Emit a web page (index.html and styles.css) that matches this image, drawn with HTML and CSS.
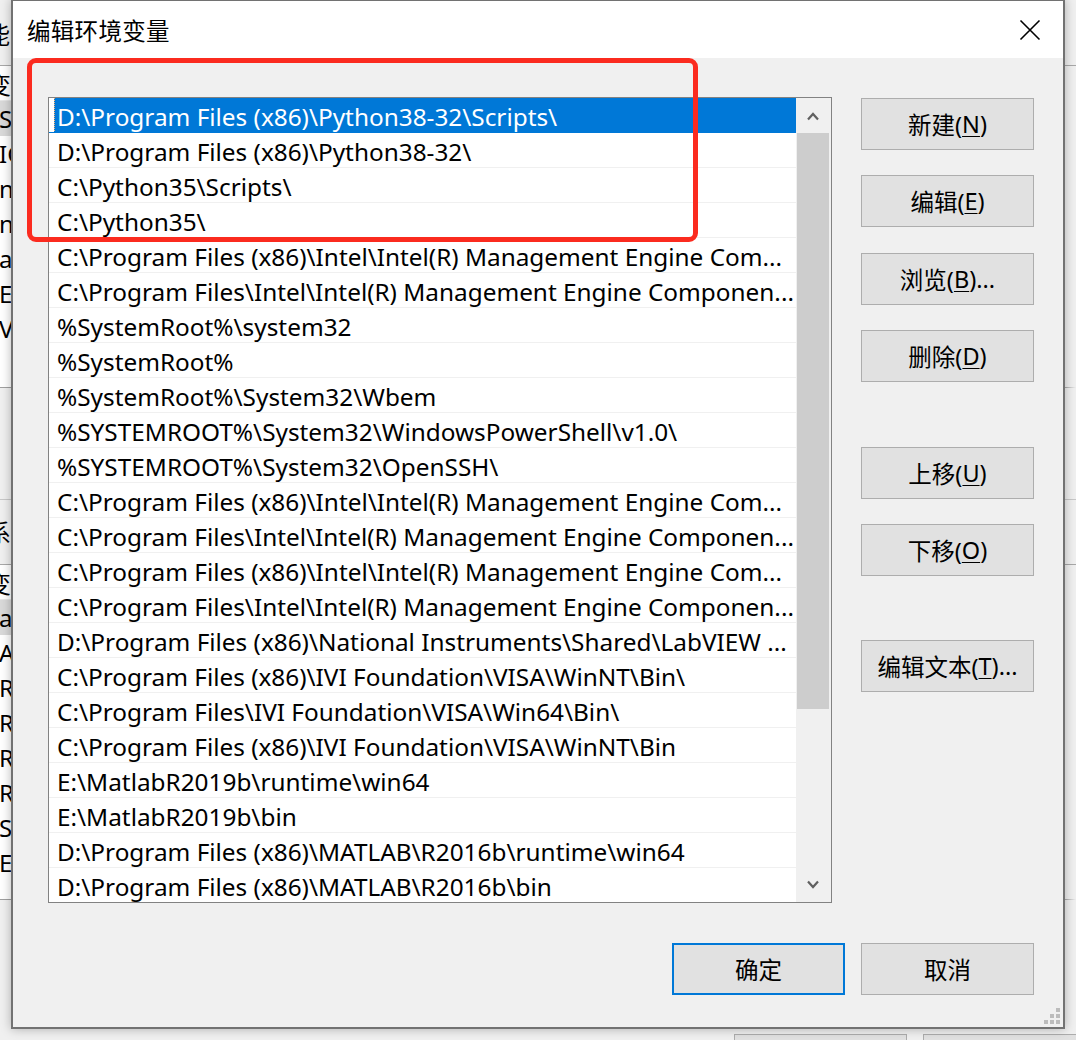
FILE: index.html
```html
<!DOCTYPE html>
<html lang="zh-CN">
<head>
<meta charset="utf-8">
<title>编辑环境变量</title>
<link rel="stylesheet" href="styles.css">
</head>
<body>
<div class="desk">
  <div class="bg-head"><span class="frag cjk">能</span></div>
  <div class="bg-table">
    <div class="bg-th"><span class="frag cjk hd">变量</span></div>
    <div class="bg-row sel"><span class="frag">STEM</span></div>
    <div class="bg-row"><span class="frag">ICK</span></div>
    <div class="bg-row"><span class="frag">nux</span></div>
    <div class="bg-row"><span class="frag">nu</span></div>
    <div class="bg-row"><span class="frag">ath</span></div>
    <div class="bg-row"><span class="frag">EMP</span></div>
    <div class="bg-row"><span class="frag">VIR</span></div>
  </div>
  <div class="bg-gap"></div>
  <div class="bg-head2"><span class="frag cjk hd">系统</span></div>
  <div class="bg-table t2">
    <div class="bg-th"><span class="frag cjk hd">变量</span></div>
    <div class="bg-row sel"><span class="frag">ath</span></div>
    <div class="bg-row"><span class="frag">ATH</span></div>
    <div class="bg-row"><span class="frag">ROC</span></div>
    <div class="bg-row"><span class="frag">ROC</span></div>
    <div class="bg-row"><span class="frag">ROC</span></div>
    <div class="bg-row"><span class="frag">ROC</span></div>
    <div class="bg-row"><span class="frag">SIS</span></div>
    <div class="bg-row"><span class="frag">EMP</span></div>
  </div>
  <div class="bg-foot">
    <div class="bg-btn"></div>
    <div class="bg-btn"></div>
  </div>
</div>

<div class="dialog">
  <div class="titlebar">
    <span class="title">编辑环境变量</span>
    <svg class="close" width="22" height="22" viewBox="0 0 22 22"><path d="M1.5 1.5 L20.5 20.5 M20.5 1.5 L1.5 20.5" stroke="#000" stroke-width="1.6" fill="none"/></svg>
  </div>
  <div class="dlg-body">
    <div class="main">
      <div class="listbox">
        <ul class="rows">
          <li class="selected"><span>D:\Program Files (x86)\Python38-32\Scripts\</span></li>
          <li><span>D:\Program Files (x86)\Python38-32\</span></li>
          <li><span>C:\Python35\Scripts\</span></li>
          <li><span>C:\Python35\</span></li>
          <li><span>C:\Program Files (x86)\Intel\Intel(R) Management Engine Com...</span></li>
          <li><span>C:\Program Files\Intel\Intel(R) Management Engine Componen...</span></li>
          <li><span>%SystemRoot%\system32</span></li>
          <li><span>%SystemRoot%</span></li>
          <li><span>%SystemRoot%\System32\Wbem</span></li>
          <li><span>%SYSTEMROOT%\System32\WindowsPowerShell\v1.0\</span></li>
          <li><span>%SYSTEMROOT%\System32\OpenSSH\</span></li>
          <li><span>C:\Program Files (x86)\Intel\Intel(R) Management Engine Com...</span></li>
          <li><span>C:\Program Files\Intel\Intel(R) Management Engine Componen...</span></li>
          <li><span>C:\Program Files (x86)\Intel\Intel(R) Management Engine Com...</span></li>
          <li><span>C:\Program Files\Intel\Intel(R) Management Engine Componen...</span></li>
          <li><span>D:\Program Files (x86)\National Instruments\Shared\LabVIEW ...</span></li>
          <li><span>C:\Program Files (x86)\IVI Foundation\VISA\WinNT\Bin\</span></li>
          <li><span>C:\Program Files\IVI Foundation\VISA\Win64\Bin\</span></li>
          <li><span>C:\Program Files (x86)\IVI Foundation\VISA\WinNT\Bin</span></li>
          <li><span>E:\MatlabR2019b\runtime\win64</span></li>
          <li><span>E:\MatlabR2019b\bin</span></li>
          <li><span>D:\Program Files (x86)\MATLAB\R2016b\runtime\win64</span></li>
          <li><span>D:\Program Files (x86)\MATLAB\R2016b\bin</span></li>
        </ul>
        <div class="vscroll">
          <div class="sb-btn"><svg width="12" height="10" viewBox="0 0 12 10"><path d="M1 8.5 L6 3 L11 8.5" stroke="#606060" stroke-width="2.2" fill="none"/></svg></div>
          <div class="sb-track"><div class="sb-thumb"></div></div>
          <div class="sb-btn"><svg width="12" height="10" viewBox="0 0 12 10"><path d="M1 1.5 L6 7 L11 1.5" stroke="#606060" stroke-width="2.2" fill="none"/></svg></div>
        </div>
      </div>
      <div class="side">
        <button class="btn">新建(<u>N</u>)</button>
        <button class="btn">编辑(<u>E</u>)</button>
        <button class="btn g26">浏览(<u>B</u>)...</button>
        <button class="btn">删除(<u>D</u>)</button>
        <button class="btn g65">上移(<u>U</u>)</button>
        <button class="btn">下移(<u>O</u>)</button>
        <button class="btn g64">编辑文本(<u>T</u>)...</button>
      </div>
    </div>
    <div class="footer">
      <button class="btn default">确定</button>
      <button class="btn">取消</button>
    </div>
  </div>
  <svg class="grip" width="17" height="17" viewBox="0 0 17 17">
    <rect x="12" y="0" width="4" height="4" fill="#bcbcbc"/>
    <rect x="6" y="6" width="4" height="4" fill="#bcbcbc"/>
    <rect x="12" y="6" width="4" height="4" fill="#bcbcbc"/>
    <rect x="0" y="12" width="4" height="4" fill="#bcbcbc"/>
    <rect x="6" y="12" width="4" height="4" fill="#bcbcbc"/>
    <rect x="12" y="12" width="4" height="4" fill="#bcbcbc"/>
  </svg>
</div>

<div class="annot"></div>
</body>
</html>
```
FILE: styles.css
```css
* { box-sizing: border-box; }
html, body {
  margin: 0;
  padding: 0;
  width: 1076px;
  height: 1040px;
  overflow: hidden;
  background: #f0f0f0;
  font-family: "Noto Sans", "Noto Sans CJK SC", sans-serif;
  color: #000;
}

/* ---------- background window ---------- */
.desk {
  width: 1076px;
  height: 1040px;
  display: flex;
  flex-direction: column;
  position: relative;
}
.frag {
  font-size: 24px;
  line-height: 35px;
  white-space: nowrap;
  margin-left: -1px;
}
.cjk { font-family: "Noto Sans CJK SC", sans-serif; }
.hd { margin-left: -13px; }
.bg-head {
  height: 66px;
  border-bottom: 1px solid #a8a8a8;
  padding-top: 16px;
}
.bg-head .frag { margin-left: -14px; }
.bg-table {
  height: 322px;
  background: #fff;
  border-right: 12px solid #f0f0f0;
  border-bottom: 1px solid #a0a0a0;
}
.bg-th {
  height: 35px;
  background: #fff;
  border-bottom: 1px solid #e6e6e6;
}
.bg-row { height: 35px; }
.bg-row.sel { background: #d9d9d9; }
.bg-gap {
  height: 112px;
  border-bottom: 1px solid #c8c8c8;
}
.bg-head2 {
  height: 65px;
  padding-top: 14px;
  border-bottom: 1px solid #a8a8a8;
}
.bg-table.t2 { height: 335px; }
.bg-foot {
  flex: 1;
  display: flex;
  justify-content: flex-end;
  align-items: flex-end;
  gap: 16px;
  margin-right: -20px;
}
.bg-btn {
  width: 173px;
  height: 6px;
  background: #e1e1e1;
  border: 1px solid #adadad;
  border-bottom: none;
}

/* ---------- dialog ---------- */
.dialog {
  position: absolute;
  left: 11px;
  top: -1px;
  width: 1054px;
  height: 1030px;
  border: 2px solid #727272;
  background: #f0f0f0;
  box-shadow: 0 0 10px rgba(0, 0, 0, 0.28);
  display: flex;
  flex-direction: column;
}
.titlebar {
  height: 57px;
  flex: none;
  background: #fff;
  display: flex;
  align-items: center;
  justify-content: space-between;
  padding: 0 22px 0 14px;
}
.title {
  font-family: "Noto Sans CJK SC", sans-serif;
  font-size: 23.5px;
  letter-spacing: 0.3px;
  margin-top: 1px;
}
.close { display: block; margin-top: 1px; }

.dlg-body {
  flex: 1;
  display: flex;
  flex-direction: column;
  padding: 39px 29px 0 35px;
}
.main {
  display: flex;
  gap: 29px;
  align-items: flex-start;
}
.listbox {
  width: 784px;
  height: 806px;
  border: 1px solid #828282;
  background: #fff;
  display: flex;
}
.rows {
  list-style: none;
  margin: 0;
  padding: 0;
  width: 747px;
  overflow: hidden;
}
.rows li {
  height: 35px;
  border-bottom: 1px solid #f0f0f0;
  padding-left: 5px;
  font-size: 24.35px;
  line-height: 37px;
  white-space: nowrap;
  overflow: hidden;
}
.rows li span {
  display: block;
  height: 34px;
  padding-left: 3px;
}
.rows li.selected { border-bottom-color: #0078d7; }
.rows li.selected span {
  background: #0078d7;
  color: #fff;
  height: 35px;
  border-left: 1px dotted #f4b27a;
  padding-left: 2px;
}
.vscroll {
  width: 35px;
  background: #f0f0f0;
  display: flex;
  flex-direction: column;
}
.sb-btn {
  height: 35px;
  display: flex;
  align-items: center;
  justify-content: center;
  padding-right: 2px;
}
.sb-track {
  flex: 1;
  padding: 0 2px 0 1px;
}
.sb-thumb {
  height: 576px;
  background: #cdcdcd;
}

.side {
  width: 173px;
  display: flex;
  flex-direction: column;
  gap: 25px;
  padding-top: 1px;
}
.btn {
  width: 173px;
  height: 52px;
  background: #e1e1e1;
  border: 1px solid #adadad;
  border-radius: 0;
  font-family: "Noto Sans", "Noto Sans CJK SC", sans-serif;
  font-size: 23.5px;
  color: #000;
  padding: 0;
  display: flex;
  align-items: center;
  justify-content: center;
  white-space: nowrap;
}
.btn u { text-underline-offset: 3px; text-decoration-thickness: 1px; }
.g26 { margin-top: 1px; }
.g65 { margin-top: 40px; }
.g64 { margin-top: 39px; }

.footer {
  margin-top: 40px;
  display: flex;
  justify-content: flex-end;
  gap: 16px;
}
.btn.default { border: 2px solid #0078d7; }

.grip {
  position: absolute;
  right: 2px;
  bottom: 2px;
}

/* red annotation rectangle */
.annot {
  position: absolute;
  left: 27px;
  top: 58px;
  width: 671px;
  height: 184px;
  border: 5px solid #fb2b1f;
  border-radius: 9px;
}
```
